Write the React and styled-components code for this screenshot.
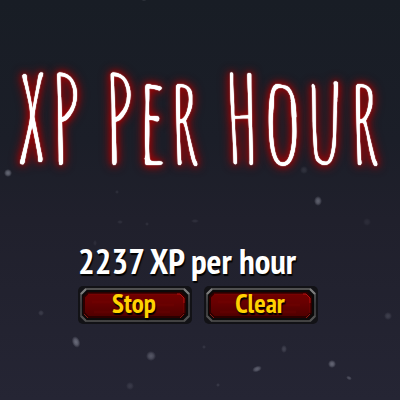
import { useState } from "react";
import styled, { createGlobalStyle } from "styled-components";

const RATE = 2237;

const FLAKES = [
  { x: 8, y: 173, rx: 4, ry: 4, o: 0.45 },
  { x: 304, y: 170, rx: 4, ry: 4, o: 0.12 },
  { x: 318, y: 201, rx: 4, ry: 5, o: 0.4 },
  { x: 367, y: 222, rx: 4, ry: 4, o: 0.08 },
  { x: 117, y: 192, rx: 2, ry: 2, o: 0.1 },
  { x: 120, y: 222, rx: 3, ry: 2, o: 0.1 },
  { x: 147, y: 224, rx: 2, ry: 2, o: 0.1 },
  { x: 195, y: 221, rx: 4, ry: 2, o: 0.1 },
  { x: 144, y: 0, rx: 3, ry: 1, o: 0.15 },
  { x: 95, y: 243, rx: 2, ry: 3, o: 0.08 },
  { x: 41, y: 313, rx: 3, ry: 3, o: 0.16 },
  { x: 388, y: 316, rx: 4, ry: 4, o: 0.18 },
  { x: 76, y: 342, rx: 4, ry: 6, o: 0.45, r: -20 },
  { x: 151, y: 356, rx: 5, ry: 5, o: 0.32 },
  { x: 204, y: 347, rx: 2, ry: 2, o: 0.12 },
  { x: 284, y: 349, rx: 3, ry: 4, o: 0.2 },
  { x: 257, y: 369, rx: 5, ry: 3, o: 0.38, r: -20 },
  { x: 332, y: 364, rx: 4, ry: 4, o: 0.42 },
  { x: 349, y: 378, rx: 3, ry: 2, o: 0.28, r: 25 },
  { x: 130, y: 386, rx: 4, ry: 4, o: 0.14 },
  { x: 218, y: 385, rx: 2, ry: 2, o: 0.14 },
];

const Snow = () => (
  <SnowLayer viewBox="0 0 400 400" preserveAspectRatio="xMidYMid slice" aria-hidden="true">
    <defs>
      <radialGradient id="flake">
        <stop offset="0" stopColor="#c4c8d8" />
        <stop offset="0.5" stopColor="#c4c8d8" stopOpacity="0.7" />
        <stop offset="1" stopColor="#c4c8d8" stopOpacity="0" />
      </radialGradient>
    </defs>
    {FLAKES.map((f) => (
      <ellipse
        key={`${f.x}-${f.y}`}
        cx={f.x}
        cy={f.y}
        rx={f.rx}
        ry={f.ry}
        opacity={f.o}
        fill="url(#flake)"
        transform={`rotate(${f.r || 0} ${f.x} ${f.y})`}
      />
    ))}
  </SnowLayer>
);

const ButtonFrame = ({ id }) => (
  <FrameSvg viewBox="0 0 114 38" preserveAspectRatio="none" aria-hidden="true">
    <defs>
      <linearGradient id={`${id}-metal`} x1="0" y1="0" x2="0" y2="1">
        <stop offset="0" stopColor="#505050" />
        <stop offset="0.5" stopColor="#38383a" />
        <stop offset="1" stopColor="#424242" />
      </linearGradient>
      <linearGradient id={`${id}-red`} x1="0" y1="0" x2="0" y2="1">
        <stop offset="0" stopColor="#720000" />
        <stop offset="0.4" stopColor="#680001" />
        <stop offset="1" stopColor="#4e0000" />
      </linearGradient>
    </defs>
    <rect width="114" height="38" rx="5" fill="#121216" />
    <path
      d="M8 3H106L111 8V30L106 35H8L3 30V8Z"
      fill="#0b0909"
      stroke={`url(#${id}-metal)`}
      strokeWidth="2"
    />
    <path d="M3 8L8 3M106 3L111 8" stroke="#7c7c7c" strokeWidth="2" />
    <path d="M3 30L8 35M106 35L111 30" stroke="#505050" strokeWidth="2" />
    <path d="M10 7H103L107 11V27L103 31H10L6 27V11Z" fill={`url(#${id}-red)`} stroke="#2a0000" strokeWidth="2" />
    <path d="M10 8H102L106 12V27" fill="none" stroke="#920808" strokeOpacity="0.5" />
    <path d="M99 8H102L106 12V17" fill="none" stroke="#c11313" strokeOpacity="0.8" />
    <path d="M6 28L10 32M102 32L106 28" stroke="#9c2118" strokeOpacity="0.8" />
    <path d="M14 16H36M70 19H96M16 26H92" stroke="#8b0a0a" strokeWidth="3" strokeOpacity="0.15" />
  </FrameSvg>
);

const App = () => {
  const [running, setRunning] = useState(true);
  const [rate, setRate] = useState(RATE);

  return (
    <>
      <GlobalStyle />
      <Page>
        <Snow />
        <Title>XP Per Hour</Title>
        <Counter>
          <Rate>{rate} XP per hour</Rate>
          <Controls>
            <GameButton type="button" onClick={() => setRunning(!running)}>
              <ButtonFrame id="toggle" />
              <ButtonLabel>{running ? "Stop" : "Start"}</ButtonLabel>
            </GameButton>
            <GameButton type="button" onClick={() => setRate(0)}>
              <ButtonFrame id="clear" />
              <ButtonLabel>Clear</ButtonLabel>
            </GameButton>
          </Controls>
        </Counter>
      </Page>
    </>
  );
};

export default App;

const GlobalStyle = createGlobalStyle`
  body {
    margin: 0;
    background: #242433;
    font-family: "PT Sans Narrow", "Liberation Sans Narrow", "Liberation Sans", sans-serif;
  }
`;

const Page = styled.main`
  position: relative;
  box-sizing: border-box;
  min-height: 100vh;
  padding-top: 42px;
  display: flex;
  flex-direction: column;
  align-items: center;
  overflow: hidden;
  background: linear-gradient(#181d25 0%, #1b1e28 35%, #20202c 55%, #252534 100%);
`;

const SnowLayer = styled.svg`
  position: absolute;
  inset: 0;
  width: 100%;
  height: 100%;
  pointer-events: none;
`;

const Title = styled.h1`
  position: relative;
  margin: 0;
  padding-right: 2px;
  color: #fff;
  font-family: "Amatic SC", "Liberation Sans Narrow", "Liberation Sans", sans-serif;
  font-size: 120px;
  font-weight: 400;
  line-height: 152px;
  white-space: nowrap;
  text-shadow: 0 0 1px #fff, 0 0 1px #fff, 0 0 6px #b00000, 0 0 10px #b00000, 0 0 12px #a00000;
`;

const Counter = styled.section`
  position: relative;
  margin-top: 45px;
  padding-right: 4px;
`;

const Rate = styled.p`
  margin: 0;
  color: #fff;
  font-size: 35px;
  font-weight: 700;
  line-height: 44px;
  white-space: nowrap;
  text-shadow: 1px 2px 1px #000;
`;

const Controls = styled.div`
  display: flex;
  gap: 12px;
  margin-top: 3px;
`;

const GameButton = styled.button`
  position: relative;
  width: 114px;
  height: 38px;
  padding: 0 2px 4px 0;
  border: 0;
  background: none;
  color: #ffd100;
  font-family: inherit;
  font-size: 27px;
  font-weight: 700;
  line-height: 32px;
  cursor: pointer;
`;

const FrameSvg = styled.svg`
  position: absolute;
  inset: 0;
  width: 100%;
  height: 100%;
`;

const ButtonLabel = styled.span`
  position: relative;
  text-shadow: 1px 2px 1px #000;
`;
